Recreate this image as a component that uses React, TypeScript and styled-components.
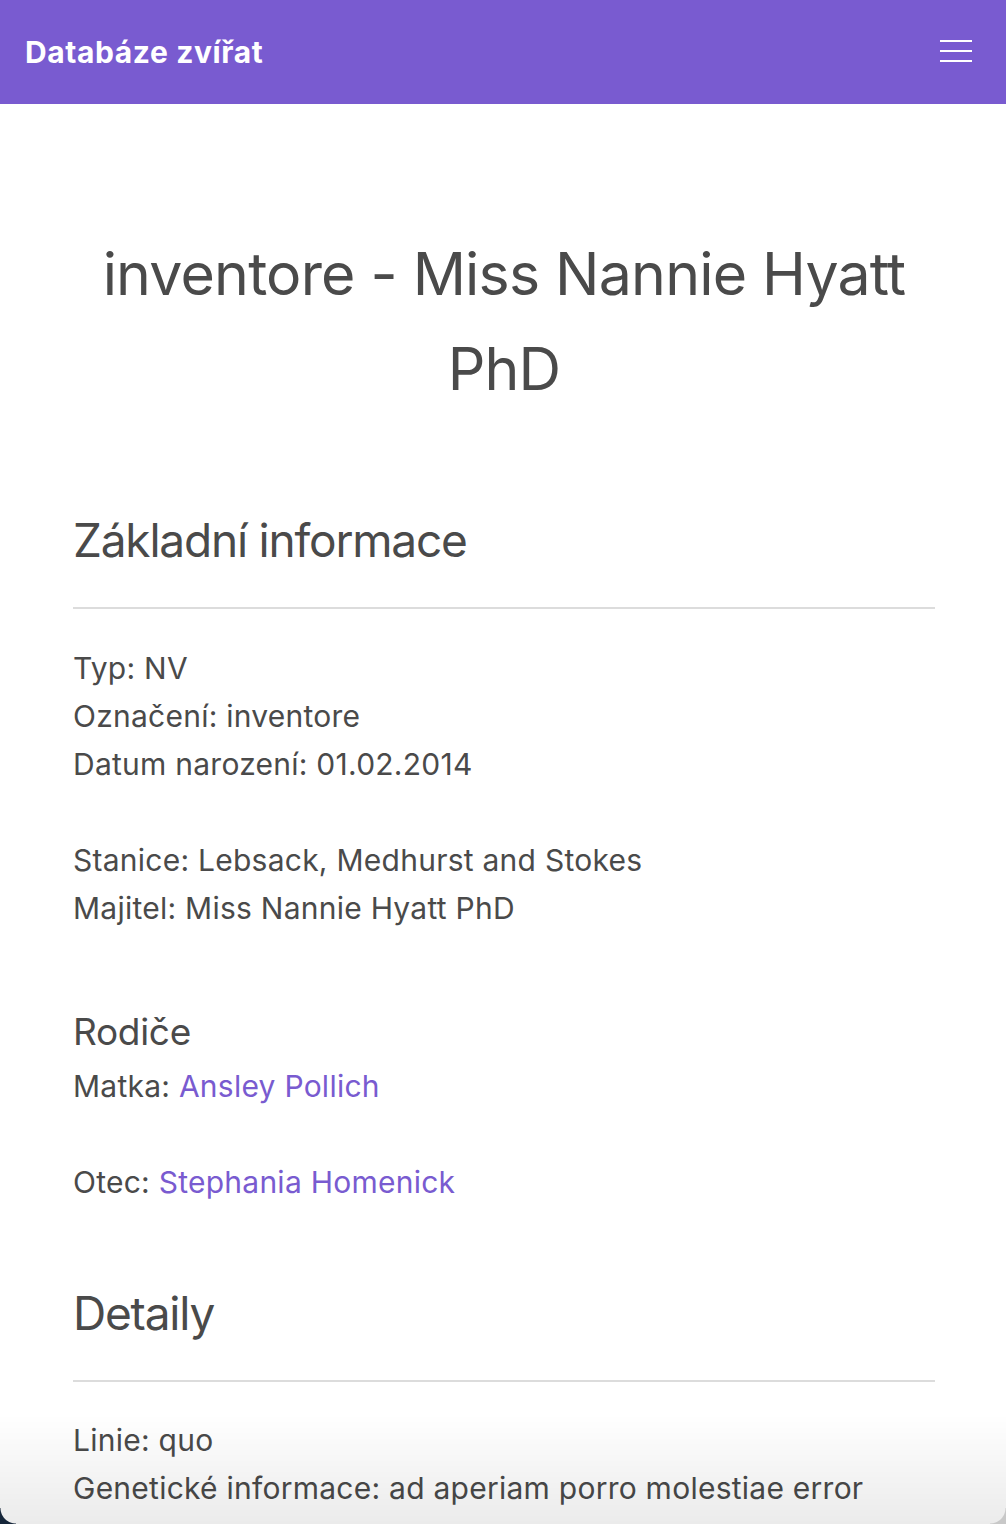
import React from "react";
import styled, { createGlobalStyle } from "styled-components";

const Global = createGlobalStyle`
  html, body { margin: 0; padding: 0; background: #ffffff; }
  body { font-family: Inter, "Noto Sans", sans-serif; color: #4a4a4a; }
`;

const NavBar = styled.header`
  height: 104px;
  background: #795bd0;
  display: flex;
  align-items: center;
  justify-content: space-between;
  padding: 0 34px 0 25px;
`;

const Brand = styled.a`
  color: #ffffff;
  font-weight: 700;
  font-size: 30px;
  text-decoration: none;
  letter-spacing: 0.6px;
`;

const Burger = styled.button`
  width: 32px;
  height: 22px;
  padding: 0;
  border: none;
  background: transparent;
  display: flex;
  flex-direction: column;
  justify-content: space-between;
  margin-bottom: 3px;
`;

const BurgerLine = styled.span`
  display: block;
  height: 2px;
  width: 32px;
  background: #ffffff;
`;

const Main = styled.main`
  padding: 0 71px 0 73px;
`;

const Title = styled.h1`
  margin: 122px 0 0;
  font-size: 59px;
  line-height: 95px;
  font-weight: 400;
  letter-spacing: -0.8px;
  text-align: center;
  color: #4a4a4a;
`;

const SectionTitle = styled.h2<{ $top: number }>`
  margin: ${(p) => p.$top}px 0 0;
  font-size: 46px;
  line-height: 58px;
  font-weight: 400;
  letter-spacing: -1.2px;
  color: #4a4a4a;
`;

const SubTitle = styled.h3`
  margin: 77px 0 0;
  font-size: 37px;
  line-height: 46px;
  font-weight: 400;
  letter-spacing: -0.3px;
  color: #4a4a4a;
`;

const Rule = styled.hr`
  margin: 38px 0 0;
  border: none;
  border-top: 2px solid #dcdcdc;
  height: 0;
`;

const Block = styled.div<{ $top: number }>`
  margin-top: ${(p) => p.$top}px;
  font-size: 30px;
  line-height: 48px;
  letter-spacing: 0.25px;
`;

const Line = styled.div``;

const Gap = styled.div`
  height: 48px;
`;

const Link = styled.a`
  color: #795bd0;
  text-decoration: none;
`;

const BottomFade = styled.div`
  position: fixed;
  left: 0;
  right: 0;
  bottom: 0;
  height: 110px;
  pointer-events: none;
  background: linear-gradient(to bottom, rgba(0, 0, 0, 0) 0%, rgba(0, 0, 0, 0.08) 100%);
`;

const Corner = styled.div<{ $side: "left" | "right" }>`
  position: fixed;
  bottom: 0;
  ${(p) => p.$side}: 0;
  width: 16px;
  height: 16px;
  pointer-events: none;
  background: radial-gradient(
    circle at ${(p) => (p.$side === "left" ? "100% 0%" : "0% 0%")},
    transparent 15px,
    ${(p) => (p.$side === "left" ? "#16263a" : "#c8c8c8")} 16px
  );
`;

export default function App() {
  return (
    <>
      <Global />
      <NavBar>
        <Brand href="#">Databáze zvířat</Brand>
        <Burger aria-label="menu">
          <BurgerLine />
          <BurgerLine />
          <BurgerLine />
        </Burger>
      </NavBar>
      <Main>
        <Title>inventore - Miss Nannie Hyatt PhD</Title>

        <SectionTitle $top={95}>Základní informace</SectionTitle>
        <Rule />
        <Block $top={35}>
          <Line>Typ: NV</Line>
          <Line>Označení: inventore</Line>
          <Line>Datum narození: 01.02.2014</Line>
          <Gap />
          <Line>Stanice: Lebsack, Medhurst and Stokes</Line>
          <Line>Majitel: Miss Nannie Hyatt PhD</Line>
        </Block>

        <SubTitle>Rodiče</SubTitle>
        <Block $top={7}>
          <Line>
            Matka: <Link href="#">Ansley Pollich</Link>
          </Line>
          <Gap />
          <Line>
            Otec: <Link href="#">Stephania Homenick</Link>
          </Line>
        </Block>

        <SectionTitle $top={78}>Detaily</SectionTitle>
        <Rule />
        <Block $top={34}>
          <Line>Linie: quo</Line>
          <Line>Genetické informace: ad aperiam porro molestiae error</Line>
          <Line>Hmotnost: 12 kg</Line>
          <Line>Poznámka: velit</Line>
        </Block>
      </Main>
      <BottomFade />
      <Corner $side="left" />
      <Corner $side="right" />
    </>
  );
}
